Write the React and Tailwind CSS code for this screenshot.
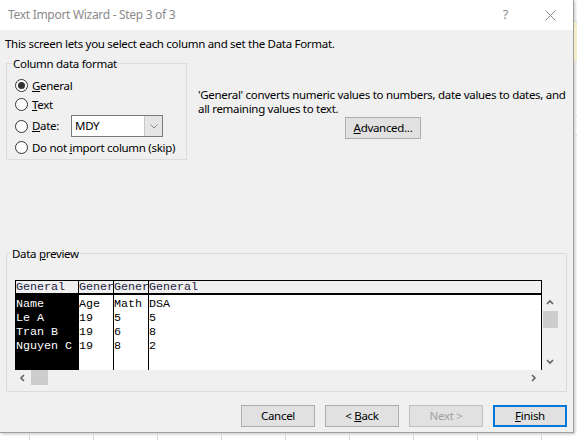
import React from 'react';

const ui = "font-['Segoe_UI','Noto_Sans',sans-serif] text-[11.5px] tracking-[-0.3px]";
const mono = "font-['Courier_New','Liberation_Mono',monospace] text-[11.7px] tracking-[0px]";

const columns = [
  { head: 'General', width: 'w-[63px]', cells: ['Name', 'Le A', 'Tran B', 'Nguyen C'], selected: true },
  { head: 'Gener', width: 'w-[35px]', cells: ['Age', '19', '19', '19'] },
  { head: 'Gener', width: 'w-[35px]', cells: ['Math', '5', '6', '8'] },
  { head: 'General', width: 'flex-1', cells: ['DSA', '5', '8', '2'], last: true },
];

const Chevron = ({ dir, className = '' }) => {
  const pts = {
    up: '1,5 4,2 7,5',
    down: '1,2 4,5 7,2',
    left: '5,1 2,4 5,7',
    right: '2,1 5,4 2,7',
  }[dir];
  return (
    <svg width="8" height="8" viewBox="0 0 8 8" className={className}>
      <polyline points={pts} fill="none" stroke="#606060" strokeWidth="1.6" />
    </svg>
  );
};

const Radio = ({ checked }) => (
  <span className="w-[13px] h-[13px] rounded-full border border-[#333] bg-white flex items-center justify-center shrink-0">
    {checked && <span className="w-[7px] h-[7px] rounded-full bg-[#333]" />}
  </span>
);

const Button = ({ children, disabled, primary }) => (
  <div
    className={`w-[74px] h-[22px] flex items-center justify-center bg-[#e1e1e1] whitespace-pre ${
      primary ? 'border-2 border-[#0078d7]' : disabled ? 'border border-[#bfbfbf] text-[#a0a0a0]' : 'border border-[#adadad]'
    }`}
  >
    {children}
  </div>
);

const App = () => {
  return (
    <div className={`w-[577px] h-[440px] bg-white flex flex-col overflow-hidden text-black ${ui}`}>
      <div className="flex h-[433px]">
        {/* dialog */}
        <div className="w-[574px] h-[433px] bg-[#f0f0f0] border-r border-b border-[#a0a0a0] flex flex-col shadow-[1px_1px_3px_rgba(0,0,0,0.25)]">
          {/* title bar */}
          <div className="h-[30px] bg-white flex items-center shrink-0">
            <span className="pl-[8px] text-[#8a8a8a] text-[12px]">Text Import Wizard - Step 3 of 3</span>
            <span className="ml-auto text-[#8a8a8a] text-[13px] mr-[37px]">?</span>
            <svg width="11" height="11" viewBox="0 0 11 11" className="mr-[17px]">
              <path d="M0.5 0.5 L10.5 10.5 M10.5 0.5 L0.5 10.5" stroke="#8a8a8a" strokeWidth="1" />
            </svg>
          </div>

          <p className="mt-[6px] pl-[5px] leading-[15px] whitespace-nowrap">This screen lets you select each column and set the Data Format.</p>

          <div className="flex mt-[5px]">
            <fieldset className="ml-[6px] w-[181px] h-[104px] border border-[#dcdcdc]">
              <legend className="ml-[5px] px-[1px] leading-[15px]">Column data format</legend>
              <div className="pl-[8px] pt-[5px] flex flex-col">
                <div className="h-[19px] flex items-center gap-[4px]">
                  <Radio checked />
                  <span><span className="underline">G</span>eneral</span>
                </div>
                <div className="h-[19px] flex items-center gap-[4px]">
                  <Radio />
                  <span><span className="underline">T</span>ext</span>
                </div>
                <div className="h-[22px] mt-[1px] flex items-center">
                  <Radio />
                  <span className="ml-[4px] w-[39px]"><span className="underline">D</span>ate:</span>
                  <div className="w-[92px] h-[22px] border border-[#7a7a7a] bg-white flex">
                    <span className="pl-[3px] flex-1 leading-[20px]">MDY</span>
                    <div className="w-[18px] h-[20px] bg-[#e5e5e5] border-l border-[#c8c8c8] flex items-center justify-center">
                      <svg width="8" height="5" viewBox="0 0 8 5">
                        <polyline points="0.5,0.5 4,4 7.5,0.5" fill="none" stroke="#8a8a8a" strokeWidth="1" />
                      </svg>
                    </div>
                  </div>
                </div>
                <div className="h-[21px] flex items-center gap-[4px] whitespace-nowrap">
                  <Radio />
                  <span>Do not <span className="underline">i</span>mport column (skip)</span>
                </div>
              </div>
            </fieldset>

            <div className="ml-[11px] w-[370px] pt-[32px] flex flex-col">
              <p className="leading-[14px] whitespace-nowrap">
                'General' converts numeric values to numbers, date values to dates, and
                <br />
                all remaining values to text.
              </p>
              <div className="mt-[1px] mx-auto w-[76px] h-[22px] border border-[#adadad] bg-[#e1e1e1] flex items-center justify-center">
                <span><span className="underline">A</span>dvanced...</span>
              </div>
            </div>
          </div>

          <fieldset className="mt-[86px] ml-[6px] w-[561px] h-[146px] border border-[#dcdcdc]">
            <legend className="ml-[4px] px-[1px] leading-[15px]">Data <span className="underline">p</span>review</legend>
            <div className="pl-[8px] pt-[19px]">
              <div className="flex w-[543px]">
                {/* grid */}
                <div className={`w-[527px] h-[90px] border-l border-t border-r border-black flex ${mono}`}>
                  {columns.map((col, i) => (
                    <div
                      key={i}
                      className={`${col.width} flex flex-col overflow-hidden whitespace-nowrap ${col.last ? '' : 'border-r border-black'}`}
                    >
                      <div className="h-[14px] bg-[#f0f0f0] border-b-2 border-black leading-[12px] text-[#1a1a40] overflow-hidden">{col.head}</div>
                      <div className={`flex-1 pt-[2px] ${col.selected ? 'bg-black text-white' : 'bg-white text-black'}`}>
                        {col.cells.map((c, j) => (
                          <div key={j} className="h-[14px] leading-[14px]">{c}</div>
                        ))}
                      </div>
                    </div>
                  ))}
                </div>
                {/* vertical scrollbar */}
                <div className="w-[16px] flex flex-col">
                  <div className="h-[15px]" />
                  <div className="h-[75px] flex flex-col items-center">
                    <div className="h-[16px] flex items-center justify-center">
                      <Chevron dir="up" />
                    </div>
                    <div className="w-[15px] h-[17px] bg-[#cdcdcd] ml-[1px]" />
                    <div className="flex-1" />
                    <div className="h-[16px] flex items-center justify-center">
                      <Chevron dir="down" />
                    </div>
                  </div>
                </div>
              </div>
              {/* horizontal scrollbar */}
              <div className="w-[527px] h-[15px] flex items-center">
                <div className="w-[16px] h-[15px] flex items-center justify-center">
                  <Chevron dir="left" />
                </div>
                <div className="w-[17px] h-[15px] bg-[#cdcdcd]" />
                <div className="flex-1" />
                <div className="w-[16px] h-[15px] flex items-center justify-center">
                  <Chevron dir="right" />
                </div>
              </div>
            </div>
          </fieldset>

          <div className="mt-[13px] flex justify-end gap-[10px] pr-[6px]">
            <Button>Cancel</Button>
            <Button>{'< '}<span className="underline">B</span>ack</Button>
            <Button disabled>{'Next >'}</Button>
            <Button primary><span className="underline">F</span>inish</Button>
          </div>
        </div>

        {/* excel sheet behind, right edge */}
        <div className="w-[3px] flex flex-col">
          <div className="h-[22px] border-b border-[#d4d4d4]" />
          <div className="h-[40px] bg-[#f3eccb] border-b border-[#d4d4d4]" />
          <div className="h-[54px] border-b border-[#d4d4d4]" />
          <div className="h-[20px] border-b border-[#d4d4d4]" />
        </div>
      </div>

      {/* excel sheet behind, bottom edge */}
      <div className="h-[7px] flex">
        <div className="w-[30px] border-r border-[#d4d4d4]" />
        {[0, 1, 2, 3, 4, 5, 6, 7].map((i) => (
          <div key={i} className="w-[64px] border-r border-[#d4d4d4]" />
        ))}
      </div>
    </div>
  );
};

export default App;
